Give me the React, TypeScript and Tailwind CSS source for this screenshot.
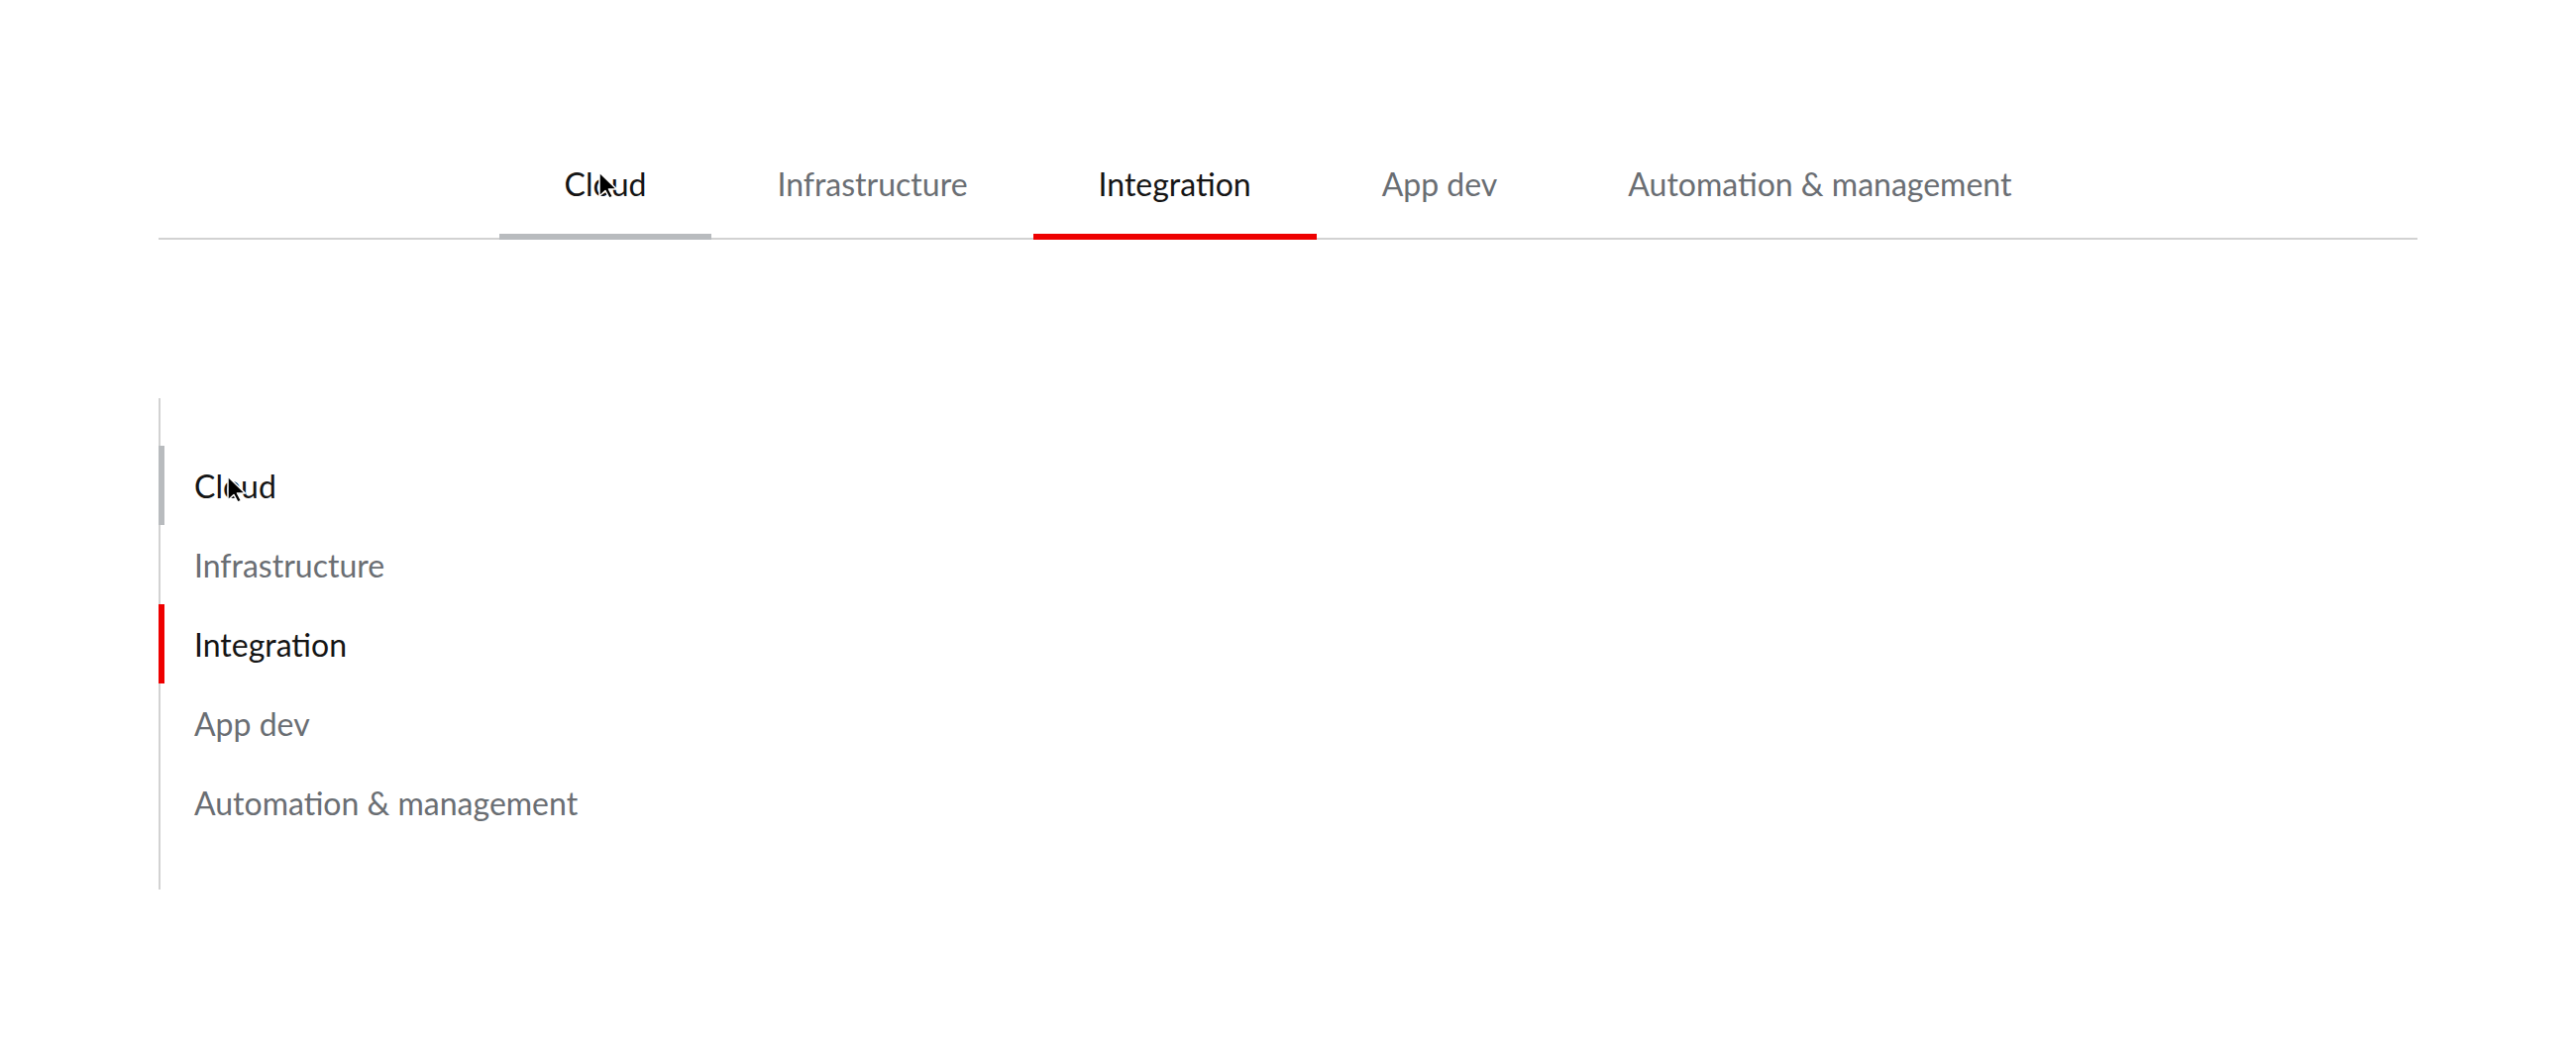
import { useState } from "react";

const items = ["Cloud", "Infrastructure", "Integration", "App dev", "Automation & management"];

const Cursor = () => (
  <svg className="h-[28px] w-[20px]" viewBox="0 0 20 28" fill="none">
    <path
      d="M1 1 L1 25 L7 19.5 L11 27 L14.5 25.5 L10.5 18 L18.5 18 Z"
      fill="#000"
      stroke="#fff"
      strokeWidth="1.5"
      strokeLinejoin="round"
    />
  </svg>
);

const App = () => {
  const [active, setActive] = useState("Integration");
  const hovered = "Cloud";

  const barColor = (item: string) =>
    item === active ? "border-[#ee0000]" : item === hovered ? "border-[#b8bbbe]" : "border-transparent";
  const textColor = (item: string) =>
    item === active || item === hovered ? "text-[#151515]" : "text-[#6a6e73]";

  return (
    <div className="min-h-screen bg-white px-[160px] pt-[146px] font-['Lato',sans-serif]">
      {/* horizontal tabs */}
      <div className="flex justify-center border-b-2 border-[#d2d2d2]">
        {items.map((item) => (
          <button
            key={item}
            onClick={() => setActive(item)}
            className={`relative -mb-[2px] border-b-[6px] px-[66px] pt-[16px] pb-[26px] text-[32px] leading-[48px] ${barColor(item)} ${textColor(item)}`}
          >
            {item}
            {item === hovered && (
              <span className="pointer-events-none absolute top-[27px] left-[100px]">
                <Cursor />
              </span>
            )}
          </button>
        ))}
      </div>

      {/* vertical tabs */}
      <div className="mt-[160px] flex w-max flex-col border-l-2 border-[#d2d2d2] py-[48px]">
        {items.map((item) => (
          <button
            key={item}
            onClick={() => setActive(item)}
            className={`relative -ml-[2px] border-l-[6px] pt-[17px] pb-[15px] pr-[32px] pl-[30px] text-left text-[32px] leading-[48px] ${barColor(item)} ${textColor(item)}`}
          >
            {item}
            {item === hovered && (
              <span className="pointer-events-none absolute top-[30px] left-[63px]">
                <Cursor />
              </span>
            )}
          </button>
        ))}
      </div>
    </div>
  );
};

export default App;
